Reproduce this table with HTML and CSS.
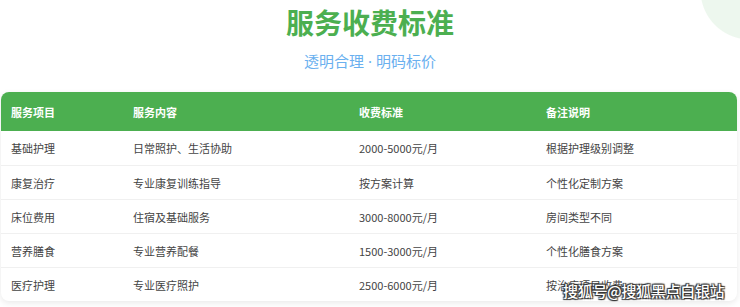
FILE: index.html
```html
<!DOCTYPE html>
<html lang="zh-CN">
<head>
<meta charset="utf-8">
<title>服务收费标准</title>
<link rel="stylesheet" href="styles.css">
</head>
<body>
<header class="head">
  <h1 class="title">服务收费标准</h1>
  <p class="subtitle">透明合理<span class="dot"> · </span>明码标价</p>
</header>
<div class="table-wrap">
  <table class="fee">
    <colgroup>
      <col class="c1"><col class="c2"><col class="c3"><col class="c4">
    </colgroup>
    <thead>
      <tr><th>服务项目</th><th>服务内容</th><th>收费标准</th><th>备注说明</th></tr>
    </thead>
    <tbody>
      <tr><td>基础护理</td><td>日常照护、生活协助</td><td>2000-5000元/月</td><td>根据护理级别调整</td></tr>
      <tr><td>康复治疗</td><td>专业康复训练指导</td><td>按方案计算</td><td>个性化定制方案</td></tr>
      <tr><td>床位费用</td><td>住宿及基础服务</td><td>3000-8000元/月</td><td>房间类型不同</td></tr>
      <tr><td>营养膳食</td><td>专业营养配餐</td><td>1500-3000元/月</td><td>个性化膳食方案</td></tr>
      <tr><td>医疗护理</td><td>专业医疗照护</td><td>2500-6000元/月</td><td>按治疗项目收费</td></tr>
    </tbody>
  </table>
</div>
<div class="watermark">搜狐号@搜狐黑点白银站</div>
</body>
</html>
```
FILE: styles.css
```css
html, body {
  margin: 0;
  padding: 0;
}
body {
  width: 740px;
  height: 307px;
  overflow: hidden;
  position: relative;
  background: radial-gradient(circle 50px at 750px -10px, #edf7ee 49px, rgba(237, 247, 238, 0) 50px) no-repeat, #ffffff;
  font-family: "Noto Sans CJK SC", "Noto Sans", sans-serif;
  color: #444;
}
.head {
  position: relative;
  text-align: center;
  padding-top: 2px;
}
.title {
  margin: 0;
  font-size: 28px;
  line-height: 40px;
  font-weight: 700;
  color: #4caf50;
}
.subtitle {
  margin: 9px 0 0;
  font-size: 15px;
  line-height: 20px;
  color: #6ab0ef;
}
.dot {
  font-family: "Noto Sans", sans-serif;
}
.table-wrap {
  position: relative;
  margin: 21px 0 0 1px;
  width: 736px;
  border-radius: 8px;
  overflow: hidden;
  background: #fff;
  box-shadow: 0 2px 6px rgba(0, 0, 0, 0.09);
}
.fee {
  width: 100%;
  border-collapse: collapse;
  table-layout: fixed;
  font-size: 11px;
}
.c1 { width: 122px; }
.c2 { width: 226px; }
.c3 { width: 187px; }
.c4 { width: 201px; }
.fee th {
  background: #4caf50;
  color: #fff;
  font-weight: 700;
  text-align: left;
  height: 39px;
  padding: 0 0 0 10px;
}
.fee td {
  height: 33px;
  padding: 0 0 0 10px;
  border-top: 1px solid #f0f0f0;
  color: #444;
  text-align: left;
}
.fee tbody tr:first-child td {
  border-top: none;
  height: 34px;
}
.watermark {
  position: absolute;
  left: 563px;
  top: 281px;
  font-size: 15px;
  line-height: 20px;
  font-weight: 500;
  color: #fff;
  letter-spacing: -0.3px;
  text-shadow: 0 0 1px #333, 1px 1px 1px #333, -1px -1px 1px #333, 1px -1px 1px #333, -1px 1px 1px #333;
}
```
